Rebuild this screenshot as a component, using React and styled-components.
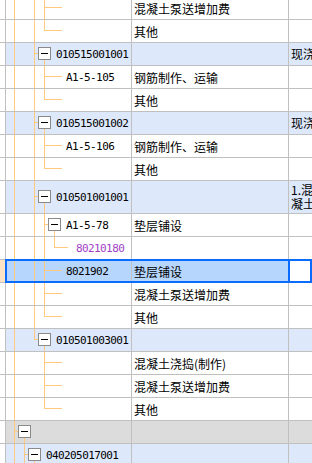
import styled, { createGlobalStyle } from "styled-components";

const GlobalStyle = createGlobalStyle`
  html, body {
    margin: 0;
    padding: 0;
    background: #fff;
    overflow: hidden;
  }
  body {
    font-family: "Noto Sans CJK SC", "Noto Sans", sans-serif;
    font-size: 12px;
    color: #000;
  }
`;

const TREE = "#ffc97f";
const GRID = "#c0c0c0";
const BG = {
  plain: "#ffffff",
  group: "#dde8fb",
  folder: "#dcdcdc",
  selected: "#b6d6fd",
};

const rows = [
  { d: 5, guides: [14, 34], desc: "混凝土泵送增加费" },
  { d: 5, guides: [14, 34], last: true, desc: "其他" },
  { d: 4, guides: [14], box: true, kind: "group", code: "010515001001", note: ["现浇构件钢筋"] },
  { d: 5, guides: [14, 34], code: "A1-5-105", desc: "钢筋制作、运输" },
  { d: 5, guides: [14, 34], last: true, desc: "其他" },
  { d: 4, guides: [14], box: true, kind: "group", code: "010515001002", note: ["现浇构件钢筋"] },
  { d: 5, guides: [14, 34], code: "A1-5-106", desc: "钢筋制作、运输" },
  { d: 5, guides: [14, 34], last: true, desc: "其他" },
  {
    d: 4, guides: [14], box: true, kind: "group", h: 32, code: "010501001001",
    note: ["1.混凝土种类:商品混", "凝土强度等级:C15"],
  },
  { d: 5, guides: [14, 34], box: true, code: "A1-5-78", desc: "垫层铺设" },
  { d: 6, guides: [14, 34, 44], last: true, leafLen: 13, code: "80210180", purple: true },
  { d: 5, guides: [14, 34], code: "8021902", desc: "垫层铺设", kind: "selected" },
  { d: 5, guides: [14, 34], desc: "混凝土泵送增加费" },
  { d: 5, guides: [14, 34], last: true, desc: "其他" },
  { d: 4, guides: [14], box: true, last: true, kind: "group", code: "010501003001" },
  { d: 5, guides: [14], desc: "混凝土浇捣(制作)" },
  { d: 5, guides: [14], desc: "混凝土泵送增加费" },
  { d: 5, guides: [14], last: true, desc: "其他" },
  { d: 2, guides: [], box: true, kind: "folder" },
  { d: 3, guides: [14], box: true, kind: "group", code: "040205017001" },
];

// tree connectors for one row, drawn in the first column's coordinates
function TreeLines({ h, d, guides, last, box, leafLen = 17 }) {
  const off = 6;
  const cy = Math.floor((h - 1) / 2);
  const cx = 4 + 10 * d - off;
  const px = cx - 10;
  const w = cx + 12;
  return (
    <TreeSvg width={w} height={h}>
      {guides.map((g) => (
        <rect key={g} x={g - off} y={0} width={1} height={h} fill={TREE} />
      ))}
      <rect x={px} y={0} width={1} height={last ? cy + 1 : h} fill={TREE} />
      {box ? (
        <>
          <rect x={px} y={cy} width={cx - 6 - px} height={1} fill={TREE} />
          <rect x={cx} y={cy + 7} width={1} height={h - cy - 7} fill={TREE} />
          <rect
            x={cx - 5.5}
            y={cy - 5.5}
            width={12}
            height={12}
            fill="#fff"
            stroke="#8a8a8a"
            strokeWidth={1}
          />
          <rect x={cx - 3} y={cy} width={7} height={1} fill="#000" />
        </>
      ) : (
        <rect x={px} y={cy} width={leafLen + 1} height={1} fill={TREE} />
      )}
    </TreeSvg>
  );
}

export default function App() {
  return (
    <>
      <GlobalStyle />
      <Sheet>
        {rows.map((r, i) => {
          const h = r.h || 22;
          const kind = r.kind || "plain";
          const bg = BG[kind];
          const selected = kind === "selected";
          return (
            <Row key={i} $h={h} $selected={selected}>
              <Gutter $selected={selected} />
              <NameCell $bg={bg}>
                <TreeLines
                  h={h}
                  d={r.d}
                  guides={r.guides}
                  last={r.last}
                  box={r.box}
                  leafLen={r.leafLen}
                />
                {r.code && <Code $purple={r.purple}>{r.code}</Code>}
              </NameCell>
              <DescCell $bg={bg} $selected={selected}>
                {r.desc}
              </DescCell>
              <NoteCell $bg={selected ? "#fff" : bg} $selected={selected}>
                {(r.note || []).map((line) => (
                  <NoteLine key={line}>{line}</NoteLine>
                ))}
              </NoteCell>
            </Row>
          );
        })}
      </Sheet>
    </>
  );
}

const Sheet = styled.div`
  display: flex;
  flex-direction: column;
  margin-top: -3px;
  width: 100%;
`;

const Row = styled.div`
  position: relative;
  display: grid;
  grid-template-columns: 6px 126px 157px 1fr;
  height: ${(p) => p.$h + 1}px;
  flex-shrink: 0;
  box-sizing: border-box;
  border-bottom: 1px solid ${GRID};

  ${(p) =>
    p.$selected &&
    `
    &::after {
      content: "";
      position: absolute;
      left: 5px;
      right: 0;
      top: -1px;
      bottom: -1px;
      border: 2px solid #0a6cff;
      pointer-events: none;
    }
  `}
`;

const Cell = styled.div`
  box-sizing: border-box;
  display: flex;
  align-items: center;
  overflow: hidden;
  white-space: nowrap;
  border-right: 1px solid ${GRID};
  background: ${(p) => p.$bg || "#fff"};
`;

const Gutter = styled(Cell)`
  background: ${(p) => (p.$selected ? "#ffe3c6" : "#fff")};
`;

const NameCell = styled(Cell)`
  padding: 0;
`;

const TreeSvg = styled.svg`
  display: block;
  flex-shrink: 0;
  overflow: visible;
`;

const Code = styled.span`
  font-family: "DejaVu Sans Mono", "Liberation Mono", monospace;
  font-size: 11px;
  letter-spacing: -0.6px;
  color: ${(p) => (p.$purple ? "#a23ec4" : "#000")};
`;

const DescCell = styled(Cell)`
  padding-left: 2px;
  font-size: 12px;
  ${(p) => p.$selected && `border-right-color: #0a6cff;`}
`;

const NoteCell = styled(Cell)`
  flex-direction: column;
  align-items: flex-start;
  justify-content: center;
  padding-left: 2px;
  border-right: none;
  ${(p) => p.$selected && `box-shadow: inset 1px 0 0 #0a6cff;`}
`;

const NoteLine = styled.div`
  font-size: 12px;
  line-height: 14px;
`;
